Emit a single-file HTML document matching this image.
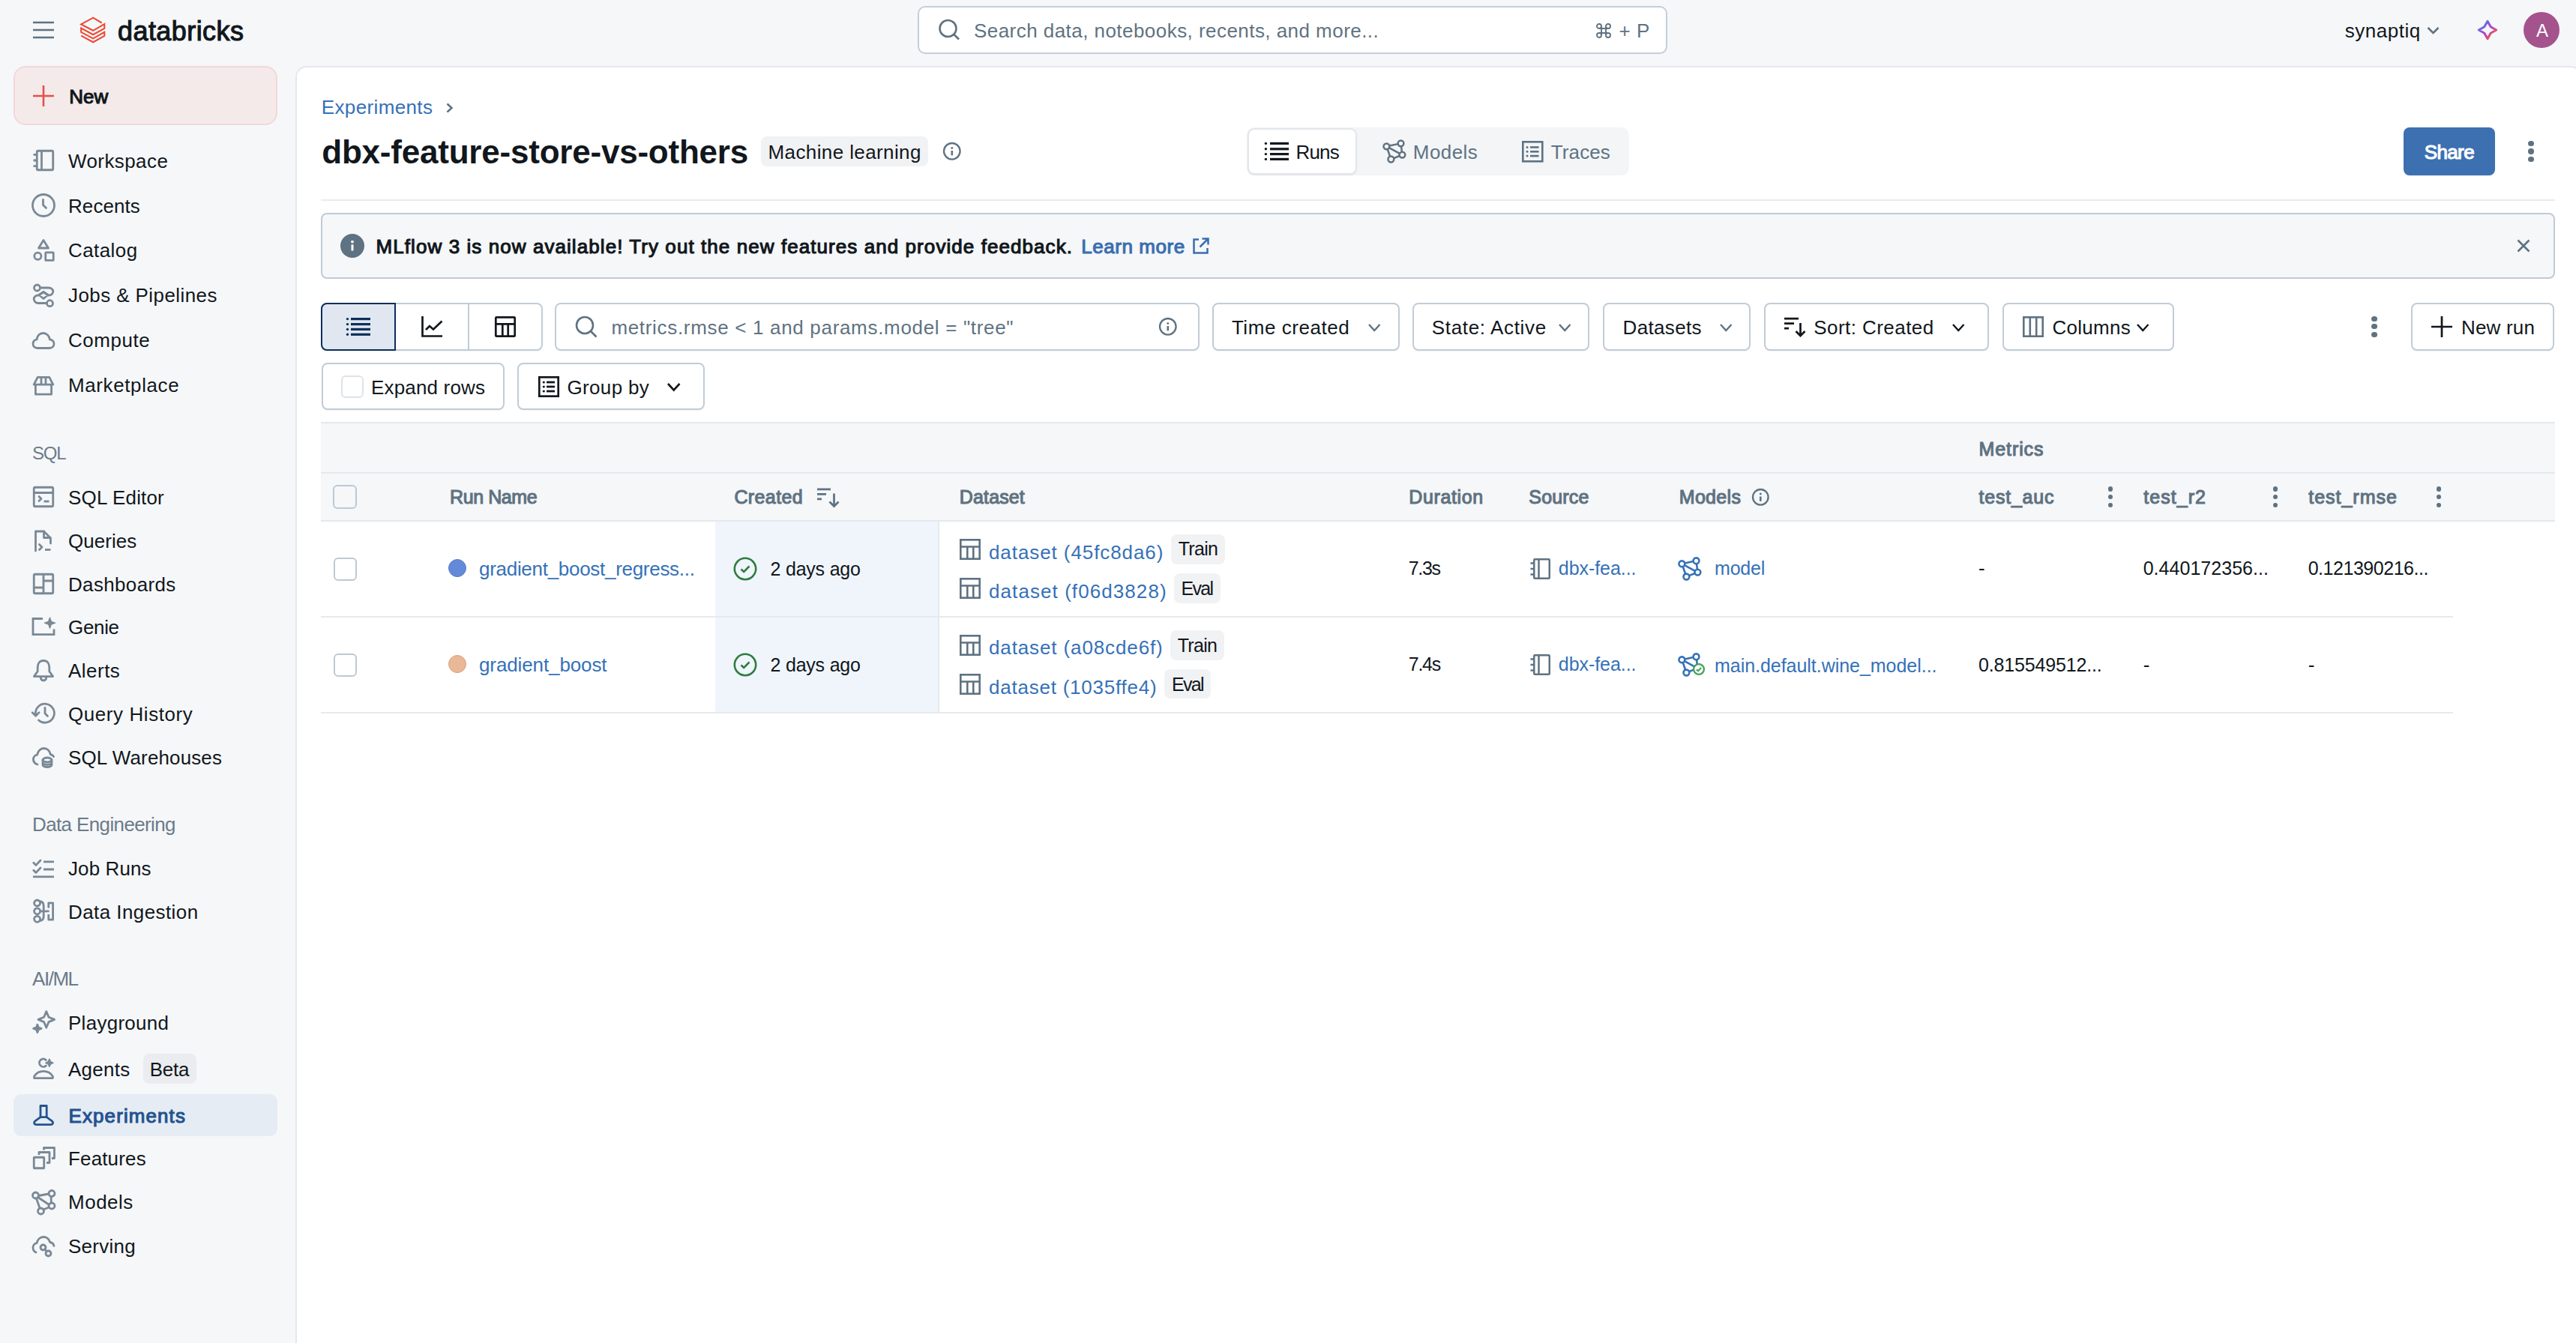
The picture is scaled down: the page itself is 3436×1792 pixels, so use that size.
<!DOCTYPE html>
<html><head><meta charset="utf-8"><title>Experiments</title>
<style>
html,body{margin:0;padding:0;width:3436px;height:1792px;overflow:hidden;background:#F6F7F9;}
body{position:relative;font-family:"Liberation Sans",sans-serif;}
.t{position:absolute;white-space:nowrap;line-height:1;}
svg{overflow:visible}
@media (max-width:1800px){html{zoom:0.5}}
</style></head><body>
<div style="position:absolute;left:1224px;top:8px;width:1000px;height:64px;box-sizing:border-box;background:#fff;border:2px solid #C2CFDB;border-radius:10px;"></div>
<svg style="position:absolute;left:1250px;top:24px;" width="34" height="34" viewBox="0 0 34 34" fill="none"><circle cx="14.5" cy="14" r="11" stroke="#5F7281" stroke-width="2.6"/><path d="M22.5 22L29 28.5" stroke="#5F7281" stroke-width="2.6"/></svg>
<div class="t" style="left:1299.00px;top:28.19px;font-size:26px;color:#5F7281;letter-spacing:0.452px;">Search data, notebooks, recents, and more...</div>
<svg style="position:absolute;left:2129px;top:31px;" width="20" height="20" viewBox="0 0 20 20" fill="none"><g stroke="#5F7281" stroke-width="1.9" fill="none"><path d="M4 7H16M4 13H16M7 4V16M13 4V16"/><circle cx="4" cy="4" r="3"/><circle cx="16" cy="4" r="3"/><circle cx="4" cy="16" r="3"/><circle cx="16" cy="16" r="3"/></g></svg>
<div class="t" style="left:2159.50px;top:27.99px;font-size:26px;color:#5F7281;">+</div>
<div class="t" style="left:2183.00px;top:27.99px;font-size:26px;color:#5F7281;">P</div>
<div class="t" style="left:3127.70px;top:27.59px;font-size:26px;color:#11171C;letter-spacing:0.536px;">synaptiq</div>
<svg style="position:absolute;left:3236px;top:34px;" width="20" height="14" viewBox="0 0 20 14" fill="none"><path d="M2.5 3L9.5 10L16.5 3" stroke="#5F7281" stroke-width="2.6"/></svg>
<svg style="position:absolute;left:3302px;top:24px;" width="32" height="32" viewBox="0 0 32 32" fill="none"><defs><linearGradient id="sg" x1="0" y1="0" x2="1" y2="1"><stop offset="0.15" stop-color="#4A7FE0"/><stop offset="0.5" stop-color="#B23FDB"/><stop offset="0.85" stop-color="#EE5548"/></linearGradient></defs><path d="M16 4.3L20.2 11.8L27.7 16L20.2 20.2L16 27.7L11.8 20.2L4.3 16L11.8 11.8Z" stroke="url(#sg)" stroke-width="3" stroke-linejoin="round"/></svg>
<div style="position:absolute;left:3366px;top:16px;width:48px;height:48px;box-sizing:border-box;background:#A4538D;border-radius:50%;"></div>
<div class="t" style="left:3383.00px;top:28.68px;font-size:24px;color:#fff;">A</div>
<svg style="position:absolute;left:44px;top:28px;" width="28" height="24" viewBox="0 0 28 24" fill="none"><path d="M0 2H28M0 12H28M0 22H28" stroke="#5F7281" stroke-width="2.4"/></svg>
<svg style="position:absolute;left:100px;top:18px;" width="50" height="44" viewBox="0 0 50 44" fill="none"><path d="M35.7 12.5L24.2 5.6L8.2 14.4L24.2 22.8L39.3 14V19.8L24.2 28.2L8.2 19.6V24.8L24.2 33.4L39.3 24.8V29.8L24.2 38.2L8.2 29.6" stroke="#EB4B36" stroke-width="2.1" stroke-linejoin="miter" fill="none"/></svg>
<div class="t" style="left:157.00px;top:23.53px;font-size:36px;color:#11171C;letter-spacing:0.427px;-webkit-text-stroke:1.1px #11171C;">databricks</div>
<div style="position:absolute;left:18px;top:88px;width:352px;height:79px;box-sizing:border-box;background:#F5EAEA;border:2px solid #F3D8D9;border-radius:16px;"></div>
<svg style="position:absolute;left:44px;top:114px;" width="28" height="28" viewBox="0 0 28 28" fill="none"><path d="M14 0V28M0 14H28" stroke="#E5504A" stroke-width="2.6"/></svg>
<div class="t" style="left:92.15px;top:115.99px;font-size:26px;color:#11171C;letter-spacing:0.085px;-webkit-text-stroke:1.1px #11171C;">New</div>
<div class="t" style="left:43.00px;top:593.28px;font-size:24px;color:#6B7B8A;letter-spacing:-1.250px;">SQL</div>
<div class="t" style="left:43.00px;top:1087.09px;font-size:26px;color:#6B7B8A;letter-spacing:-0.625px;">Data Engineering</div>
<div class="t" style="left:43.00px;top:1292.59px;font-size:26px;color:#6B7B8A;letter-spacing:-1.465px;">AI/ML</div>
<div style="position:absolute;left:18px;top:1460px;width:352px;height:56px;box-sizing:border-box;background:#E6ECF3;border-radius:10px;"></div>
<div style="position:absolute;left:191px;top:1406px;width:71px;height:40px;box-sizing:border-box;background:#EAECEF;border-radius:8px;"></div>
<div class="t" style="left:199.70px;top:1413.99px;font-size:26px;color:#11171C;letter-spacing:-0.253px;">Beta</div>
<svg style="position:absolute;left:42px;top:198.0px;" width="32" height="32" viewBox="0 0 32 32" fill="none"><g stroke="#7A8996" stroke-width="2.8" stroke-linecap="round" stroke-linejoin="round"><rect x="7.25" y="3.25" width="21.5" height="25.5" rx="1.5"/><path d="M13.5 3.5V28.5M2.5 8.4H6M2.5 16H6M2.5 23.6H6" stroke-linecap="butt"/></g></svg>
<div class="t" style="left:91.00px;top:201.69px;font-size:26px;color:#11171C;letter-spacing:0.411px;">Workspace</div>
<svg style="position:absolute;left:42px;top:258.1px;" width="32" height="32" viewBox="0 0 32 32" fill="none"><g stroke="#7A8996" stroke-width="2.8" stroke-linecap="round" stroke-linejoin="round"><circle cx="16" cy="16" r="14.5"/><path d="M15.5 8.5V15.5L19.5 19.5"/></g></svg>
<div class="t" style="left:91.00px;top:261.79px;font-size:26px;color:#11171C;letter-spacing:0.080px;">Recents</div>
<svg style="position:absolute;left:42px;top:317.8px;" width="32" height="32" viewBox="0 0 32 32" fill="none"><g stroke="#7A8996" stroke-width="2.8" stroke-linecap="round" stroke-linejoin="round"><path d="M16 2.5L22.5 13H9.5Z"/><circle cx="8.4" cy="23.7" r="4.6"/><rect x="18.75" y="18.9" width="10.5" height="10.5" rx="0.5"/></g></svg>
<div class="t" style="left:91.00px;top:321.49px;font-size:26px;color:#11171C;letter-spacing:0.422px;">Catalog</div>
<svg style="position:absolute;left:42px;top:377.8px;" width="32" height="32" viewBox="0 0 32 32" fill="none"><g stroke="#7A8996" stroke-width="2.8" stroke-linecap="round" stroke-linejoin="round"><circle cx="7.5" cy="6" r="4"/><circle cx="24.5" cy="26.7" r="4"/><path d="M11.5 6H23C26.5 6 28.8 8.5 28.8 11S26.5 16 23 16L16 11.5L9 16C5.5 16 3.2 18.5 3.2 21S5.5 26.5 9 26.5H20.5"/><path d="M16 11.5L21.5 16L16 20.5L10.5 16Z"/></g></svg>
<div class="t" style="left:91.00px;top:381.49px;font-size:26px;color:#11171C;letter-spacing:0.415px;">Jobs &amp; Pipelines</div>
<svg style="position:absolute;left:42px;top:437.8px;" width="32" height="32" viewBox="0 0 32 32" fill="none"><g stroke="#7A8996" stroke-width="2.8" stroke-linecap="round" stroke-linejoin="round"><path d="M8.5 26.5H24C27.5 26.5 30 24 30 20.8C30 17.6 27.6 15.2 24.6 15.2C23.8 10.2 20.2 6.5 15.6 6.5C11 6.5 7.6 10 7.2 14.8C4.2 15.4 2 17.8 2 20.8C2 24 4.6 26.5 8.5 26.5Z"/></g></svg>
<div class="t" style="left:91.00px;top:441.49px;font-size:26px;color:#11171C;letter-spacing:0.523px;">Compute</div>
<svg style="position:absolute;left:42px;top:497.8px;" width="32" height="32" viewBox="0 0 32 32" fill="none"><g stroke="#7A8996" stroke-width="2.8" stroke-linecap="round" stroke-linejoin="round"><path d="M3.2 15.2L8.2 5.4H23.8L28.8 15.2Z"/><path d="M13 5.6V15M19 5.6V15" stroke-linecap="butt"/><path d="M5.4 15.5V28.2H26.6V15.5"/></g></svg>
<div class="t" style="left:91.00px;top:501.49px;font-size:26px;color:#11171C;letter-spacing:0.603px;">Marketplace</div>
<svg style="position:absolute;left:42px;top:646.9px;" width="32" height="32" viewBox="0 0 32 32" fill="none"><g stroke="#7A8996" stroke-width="2.8" stroke-linecap="round" stroke-linejoin="round"><rect x="3.25" y="3.25" width="25.5" height="25.5" rx="1.5"/><path d="M3.5 10.5H28.5" /><path d="M10 15.5L13 18.5L10 21.5" /><path d="M16.5 22H23.5" stroke-linecap="butt"/></g></svg>
<div class="t" style="left:91.00px;top:650.59px;font-size:26px;color:#11171C;letter-spacing:0.174px;">SQL Editor</div>
<svg style="position:absolute;left:42px;top:705.2px;" width="32" height="32" viewBox="0 0 32 32" fill="none"><g stroke="#7A8996" stroke-width="2.8" stroke-linecap="round" stroke-linejoin="round"><path d="M5.5 30V4H16.5L25.5 13V20"/><path d="M16.5 4V12.5H25"/><path d="M10.5 21.5L14 25L10.5 28.5"/><path d="M18 28.5H25.5" stroke-linecap="butt"/></g></svg>
<div class="t" style="left:91.00px;top:708.89px;font-size:26px;color:#11171C;letter-spacing:0.050px;">Queries</div>
<svg style="position:absolute;left:42px;top:762.9px;" width="32" height="32" viewBox="0 0 32 32" fill="none"><g stroke="#7A8996" stroke-width="2.8" stroke-linecap="round" stroke-linejoin="round"><rect x="3.25" y="3.25" width="25.5" height="25.5" rx="1.5"/><path d="M16 3.5V28.5M3.5 21H16M16 12H28.5" stroke-linecap="butt"/></g></svg>
<div class="t" style="left:91.00px;top:766.59px;font-size:26px;color:#11171C;letter-spacing:0.340px;">Dashboards</div>
<svg style="position:absolute;left:42px;top:820.7px;" width="32" height="32" viewBox="0 0 32 32" fill="none"><g stroke="#7A8996" stroke-width="2.8" stroke-linecap="round" stroke-linejoin="round"><path d="M15 4.5H2V25.6H30V18.5" stroke-linecap="butt" stroke-linejoin="miter"/><path d="M24.5 3L26.4 8.3L31.7 10.2L26.4 12.1L24.5 17.4L22.6 12.1L17.3 10.2L22.6 8.3Z" fill="#7A8996" stroke-width="1.2"/></g></svg>
<div class="t" style="left:91.00px;top:824.39px;font-size:26px;color:#11171C;letter-spacing:-0.330px;">Genie</div>
<svg style="position:absolute;left:42px;top:878.5px;" width="32" height="32" viewBox="0 0 32 32" fill="none"><g stroke="#7A8996" stroke-width="2.8" stroke-linecap="round" stroke-linejoin="round"><path d="M16 2.5C10.8 2.5 8.2 6.5 8.2 11.3V16.8L3.4 23.6H28.6L23.8 16.8V11.3C23.8 6.5 21.2 2.5 16 2.5Z"/><path d="M12.2 24.6C12.2 27.3 13.8 29 16 29S19.8 27.3 19.8 24.6"/></g></svg>
<div class="t" style="left:91.00px;top:882.19px;font-size:26px;color:#11171C;letter-spacing:0.474px;">Alerts</div>
<svg style="position:absolute;left:42px;top:936.3px;" width="32" height="32" viewBox="0 0 32 32" fill="none"><g stroke="#7A8996" stroke-width="2.8" stroke-linecap="round" stroke-linejoin="round"><path d="M5.6 18A12.5 12.5 0 1 1 9.5 25"/><path d="M1.2 14.8L5.6 19.2L10 14.8"/><path d="M18 8.3V16L21.5 19.5"/></g></svg>
<div class="t" style="left:91.00px;top:939.99px;font-size:26px;color:#11171C;letter-spacing:0.570px;">Query History</div>
<svg style="position:absolute;left:42px;top:994.3px;" width="32" height="32" viewBox="0 0 32 32" fill="none"><g stroke="#7A8996" stroke-width="2.8" stroke-linecap="round" stroke-linejoin="round"><path d="M8 26C4.5 25 2.5 22.3 2.5 19.2C2.5 16 4.8 13.6 7.6 13.2C8.4 8.2 12 4.5 16.5 4.5C21 4.5 24.4 8 25.2 12.5C27 12.8 28.5 13.8 29.5 15.5"/><ellipse cx="21" cy="20" rx="6" ry="3"/><path d="M15 20V26.5C15 28.2 17.7 29.5 21 29.5S27 28.2 27 26.5V20M15 23.3C15 25 17.7 26.3 21 26.3S27 25 27 23.3"/></g></svg>
<div class="t" style="left:91.00px;top:997.99px;font-size:26px;color:#11171C;letter-spacing:0.129px;">SQL Warehouses</div>
<svg style="position:absolute;left:42px;top:1142.6px;" width="32" height="32" viewBox="0 0 32 32" fill="none"><g stroke="#7A8996" stroke-width="2.8" stroke-linecap="round" stroke-linejoin="round"><path d="M2.8 8.2L6 11.4L12 5M2.8 18.2L6 21.4L12 15" /><path d="M16 6.9H30M16 17H30M2 26.9H30" stroke-linecap="butt"/></g></svg>
<div class="t" style="left:91.00px;top:1146.29px;font-size:26px;color:#11171C;letter-spacing:0.107px;">Job Runs</div>
<svg style="position:absolute;left:42px;top:1200.3px;" width="32" height="32" viewBox="0 0 32 32" fill="none"><g stroke="#7A8996" stroke-width="2.8" stroke-linecap="round" stroke-linejoin="round"><circle cx="7.6" cy="5" r="4"/><circle cx="7.6" cy="15.8" r="4"/><circle cx="7.6" cy="26.3" r="4"/><path d="M10.5 2.5C14.5 2.8 16.2 5 16.2 8.5V23C16.2 26.5 14.5 28.5 10.5 28.8M11.6 15.8H23.6" stroke-linecap="butt"/><path d="M22.8 11.5V4.8H28.6V27.2H22.8V20" stroke-linecap="butt" stroke-linejoin="round"/></g></svg>
<div class="t" style="left:91.00px;top:1203.99px;font-size:26px;color:#11171C;letter-spacing:0.423px;">Data Ingestion</div>
<svg style="position:absolute;left:42px;top:1348.6px;" width="32" height="32" viewBox="0 0 32 32" fill="none"><g stroke="#7A8996" stroke-width="2.8" stroke-linecap="round" stroke-linejoin="round"><path d="M19.8 0.6L23.0 8.2L30.6 11.4L23.0 14.6L19.8 22.2L16.6 14.6L9.0 11.4L16.6 8.2Z"/><path d="M7.9 18.2L9.3 22.0L13.1 23.4L9.3 24.8L7.9 28.6L6.5 24.8L2.7 23.4L6.5 22.0Z" fill="#7A8996"/></g></svg>
<div class="t" style="left:91.00px;top:1352.29px;font-size:26px;color:#11171C;letter-spacing:0.271px;">Playground</div>
<svg style="position:absolute;left:42px;top:1410.3px;" width="32" height="32" viewBox="0 0 32 32" fill="none"><g stroke="#7A8996" stroke-width="2.8" stroke-linecap="round" stroke-linejoin="round"><path d="M19.4 4.5A5.2 5.2 0 1 0 19.4 11.9"/><path d="M23.9 3.2L25.5 6.6L28.9 8.2L25.5 9.8L23.9 13.2L22.3 9.8L18.9 8.2L22.3 6.6Z" fill="#7A8996" stroke-width="1.6"/><path d="M3.6 28.6V26.2C6.2 22 10.6 19.4 16 19.4S25.8 22 28.4 26.2V28.6Z"/></g></svg>
<div class="t" style="left:91.00px;top:1413.99px;font-size:26px;color:#11171C;letter-spacing:0.282px;">Agents</div>
<svg style="position:absolute;left:42px;top:1471.9px;" width="32" height="32" viewBox="0 0 32 32" fill="none"><g stroke="#24538F" stroke-width="2.8" stroke-linecap="round" stroke-linejoin="round"><path d="M12 18.6V3.5H20.2V18.6Z"/><path d="M12 18.6L4.8 23.8C2.6 25.6 3.6 28.6 6.4 28.6H25.8C28.6 28.6 29.6 25.6 27.4 23.8L20.2 18.6"/></g></svg>
<div class="t" style="left:91.55px;top:1475.59px;font-size:26px;color:#24538F;letter-spacing:1.084px;-webkit-text-stroke:1.1px #24538F;">Experiments</div>
<svg style="position:absolute;left:42px;top:1529.8px;" width="32" height="32" viewBox="0 0 32 32" fill="none"><g stroke="#7A8996" stroke-width="2.8" stroke-linecap="round" stroke-linejoin="round"><rect x="3.25" y="14.25" width="13.5" height="14.5" rx="0.5"/><path d="M10 11V7.5H24V21.5H20M16.5 4.5V1.5H30.5V15.5H27" stroke-linecap="butt"/></g></svg>
<div class="t" style="left:91.00px;top:1533.49px;font-size:26px;color:#11171C;letter-spacing:0.147px;">Features</div>
<svg style="position:absolute;left:42px;top:1587.7px;" width="32" height="32" viewBox="0 0 32 32" fill="none"><g stroke="#7A8996" stroke-width="2.8" stroke-linecap="round" stroke-linejoin="round"><circle cx="5.5" cy="7" r="4"/><circle cx="27" cy="4.5" r="4"/><circle cx="27" cy="21" r="4"/><circle cx="12.5" cy="28" r="4"/><path d="M9.5 7.5L23 5M8.5 9.5L23.5 19.5M26 8.5L26.5 17M23.2 23L15.8 26M6.5 11L11 24"/></g></svg>
<div class="t" style="left:91.00px;top:1591.39px;font-size:26px;color:#11171C;letter-spacing:0.510px;">Models</div>
<svg style="position:absolute;left:42px;top:1645.9px;" width="32" height="32" viewBox="0 0 32 32" fill="none"><g stroke="#7A8996" stroke-width="2.8" stroke-linecap="round" stroke-linejoin="round"><path d="M6 25C3.5 24 2 21.5 2 18.7C2 15.5 4.3 13 7.2 12.6C8 7.8 11.6 4.5 16 4.5C20 4.5 23.5 7.3 24.6 11.5C27.6 12 29.5 14 30 16.5"/><circle cx="15.5" cy="18.5" r="3.5"/><circle cx="22.5" cy="26.5" r="3.5"/><path d="M17.8 21L20.2 24"/></g></svg>
<div class="t" style="left:91.00px;top:1649.59px;font-size:26px;color:#11171C;letter-spacing:0.277px;">Serving</div>
<div style="position:absolute;left:394px;top:88px;width:3050px;height:1742px;box-sizing:border-box;background:#fff;border:2px solid #E4E8EC;border-radius:15px;"></div>
<div class="t" style="left:428.80px;top:129.99px;font-size:26px;color:#3571B8;letter-spacing:0.364px;">Experiments</div>
<svg style="position:absolute;left:594px;top:136px;" width="12" height="16" viewBox="0 0 12 16" fill="none"><path d="M2.5 2.5L8.5 8L2.5 13.5" stroke="#5F7281" stroke-width="2.5" fill="none"/></svg>
<div class="t" style="left:429.30px;top:181.35px;font-size:44px;color:#11171C;font-weight:700;letter-spacing:-0.217px;">dbx-feature-store-vs-others</div>
<div style="position:absolute;left:1015px;top:182px;width:223px;height:40px;box-sizing:border-box;background:#F1F2F4;border-radius:8px;"></div>
<div class="t" style="left:1024.50px;top:189.89px;font-size:26px;color:#11171C;letter-spacing:0.394px;">Machine learning</div>
<svg style="position:absolute;left:1257.0px;top:189.2px;" width="25.6" height="25.6" viewBox="0 0 25.6 25.6" fill="none"><circle cx="12.8" cy="12.8" r="10.8" stroke="#5F7281" stroke-width="2.3"/><circle cx="12.8" cy="8.600000000000001" r="1.5" fill="#5F7281"/><path d="M12.8 12.0V18.3" stroke="#5F7281" stroke-width="2.6"/></svg>
<div style="position:absolute;left:1663px;top:170px;width:510px;height:64px;box-sizing:border-box;background:#F3F5F7;border-radius:10px;"></div>
<div style="position:absolute;left:1664px;top:171px;width:146px;height:62px;box-sizing:border-box;background:#fff;border:2px solid #E3E7EB;border-radius:9px;box-shadow:0 1px 2px rgba(0,0,0,0.08);"></div>
<svg style="position:absolute;left:1686px;top:188px;" width="34" height="28" viewBox="0 0 34 28" fill="none"><g fill="#11171C"><circle cx="2.400000000000091" cy="3.4000000000000057" r="1.7"/><rect x="8" y="1.8000000000000056" width="25" height="3.2"/><circle cx="2.400000000000091" cy="10.800000000000011" r="1.7"/><rect x="8" y="9.200000000000012" width="25" height="3.2"/><circle cx="2.400000000000091" cy="17.599999999999994" r="1.7"/><rect x="8" y="15.999999999999995" width="25" height="3.2"/><circle cx="2.400000000000091" cy="24.400000000000006" r="1.7"/><rect x="8" y="22.800000000000004" width="25" height="3.2"/></g></svg>
<div class="t" style="left:1728.60px;top:189.79px;font-size:26px;color:#11171C;letter-spacing:-0.870px;">Runs</div>
<svg style="position:absolute;left:1844px;top:186px;" width="32" height="32" viewBox="0 0 32 32" fill="none"><g stroke="#5F7281" stroke-width="2.5" fill="none"><circle cx="5.4" cy="9.3" r="3.9"/><circle cx="24.5" cy="5.3" r="3.9"/><circle cx="26.4" cy="20.6" r="3.9"/><circle cx="11.4" cy="26.5" r="3.9"/><path d="M9.2 8.5L20.7 6.1M8.8 11.1L23.0 18.8M25.0 9.2L25.9 16.7M22.8 22.0L15.0 25.1M6.7 13.0L10.1 22.8"/></g></svg>
<div class="t" style="left:1884.80px;top:189.79px;font-size:26px;color:#5F7281;letter-spacing:0.430px;">Models</div>
<svg style="position:absolute;left:2030px;top:188px;" width="29" height="29" viewBox="0 0 29 29" fill="none"><g stroke="#5F7281" stroke-width="2.6"><rect x="1.3" y="1.3" width="26" height="26"/></g><g fill="#5F7281"><circle cx="7" cy="8.5" r="1.5"/><circle cx="7" cy="14.3" r="1.5"/><circle cx="7" cy="20.1" r="1.5"/><rect x="11" y="7.2" width="11.5" height="2.6"/><rect x="11" y="13" width="11.5" height="2.6"/><rect x="11" y="18.8" width="11.5" height="2.6"/></g></svg>
<div class="t" style="left:2068.70px;top:189.79px;font-size:26px;color:#5F7281;letter-spacing:0.136px;">Traces</div>
<div style="position:absolute;left:3206px;top:170px;width:122px;height:64px;box-sizing:border-box;background:#3C70B1;border-radius:8px;box-shadow:0 1px 1px rgba(0,0,0,0.08);"></div>
<div class="t" style="left:3233.75px;top:190.39px;font-size:26px;color:#fff;letter-spacing:-0.630px;-webkit-text-stroke:1.1px #fff;">Share</div>
<div style="position:absolute;left:3372.3px;top:187.5px;width:7.399999999999636px;height:7.399999999999977px;box-sizing:border-box;background:#5F7281;border-radius:50%;"></div>
<div style="position:absolute;left:3372.3px;top:198.3px;width:7.399999999999636px;height:7.399999999999977px;box-sizing:border-box;background:#5F7281;border-radius:50%;"></div>
<div style="position:absolute;left:3372.3px;top:208.9px;width:7.399999999999636px;height:7.399999999999977px;box-sizing:border-box;background:#5F7281;border-radius:50%;"></div>
<div style="position:absolute;left:428px;top:266px;width:2980px;height:2px;box-sizing:border-box;background:#E8EBEF;"></div>
<div style="position:absolute;left:428px;top:284px;width:2980px;height:88px;box-sizing:border-box;background:#F5F7F9;border:2px solid #BFCBD7;border-radius:8px;"></div>
<svg style="position:absolute;left:453.8px;top:312px;" width="32" height="32" viewBox="0 0 32 32" fill="none"><circle cx="16" cy="16" r="16" fill="#5F7281"/><circle cx="16" cy="10.6" r="1.9" fill="#fff"/><path d="M16 14.3V22.5" stroke="#fff" stroke-width="3"/></svg>
<div class="t" style="left:501.55px;top:315.59px;font-size:26px;color:#11171C;letter-spacing:1.072px;-webkit-text-stroke:1.1px #11171C;">MLflow 3 is now available! Try out the new features and provide feedback.</div>
<div class="t" style="left:1442.15px;top:315.79px;font-size:26px;color:#3A6EB0;letter-spacing:0.568px;-webkit-text-stroke:1.1px #3A6EB0;">Learn more</div>
<svg style="position:absolute;left:1590px;top:316px;" width="24" height="24" viewBox="0 0 24 24" fill="none"><g stroke="#3A6EB0" stroke-width="2.5" fill="none"><path d="M9 3.5H2.5V21.5H20.5V15"/><path d="M13.5 2.5H21.5V10.5M21 3L10.5 13.5"/></g></svg>
<svg style="position:absolute;left:3356px;top:318px;" width="20" height="20" viewBox="0 0 20 20" fill="none"><path d="M2.5 2.5L17.5 17.5M17.5 2.5L2.5 17.5" stroke="#5F7281" stroke-width="2.6"/></svg>
<div style="position:absolute;left:428px;top:404px;width:296px;height:64px;box-sizing:border-box;background:#fff;border:2px solid #C0CCD8;border-radius:8px;box-shadow:0 2px 1px -1px rgba(0,0,0,0.05);"></div>
<div style="position:absolute;left:428px;top:404px;width:100px;height:64px;box-sizing:border-box;background:#E0E7F0;border:2px solid #0E2E5A;border-radius:8px 0 0 8px;"></div>
<div style="position:absolute;left:624px;top:406px;width:2px;height:60px;box-sizing:border-box;background:#C0CCD8;"></div>
<svg style="position:absolute;left:460px;top:420px;" width="36" height="32" viewBox="0 0 36 32" fill="none"><g fill="#0E2E5A"><circle cx="3.5" cy="5.600000000000023" r="1.7"/><rect x="8" y="4.000000000000023" width="26" height="3.2"/><circle cx="3.5" cy="12.600000000000023" r="1.7"/><rect x="8" y="11.000000000000023" width="26" height="3.2"/><circle cx="3.5" cy="19.399999999999977" r="1.7"/><rect x="8" y="17.799999999999976" width="26" height="3.2"/><circle cx="3.5" cy="26.30000000000001" r="1.7"/><rect x="8" y="24.70000000000001" width="26" height="3.2"/></g></svg>
<svg style="position:absolute;left:560px;top:420px;" width="32" height="32" viewBox="0 0 32 32" fill="none"><g stroke="#11171C" stroke-width="2.7" fill="none"><path d="M3.5 2V28.5H30"/><path d="M8 20L13 15L18 19.5L29.5 8.5"/></g></svg>
<svg style="position:absolute;left:659px;top:421px;" width="30" height="30" viewBox="0 0 30 30" fill="none"><g stroke="#11171C" stroke-width="2.7" fill="none"><rect x="2.3" y="2.3" width="25.4" height="25.4" rx="1"/><path d="M2.5 11.3H27.5M11.3 11.3V27.5M18.7 11.3V27.5"/></g></svg>
<div style="position:absolute;left:740px;top:404px;width:860px;height:64px;box-sizing:border-box;background:#fff;border:2px solid #C0CCD8;border-radius:8px;box-shadow:0 2px 1px -1px rgba(0,0,0,0.05);"></div>
<svg style="position:absolute;left:766px;top:420px;" width="34" height="34" viewBox="0 0 34 34" fill="none"><circle cx="14" cy="14" r="11" stroke="#5F7281" stroke-width="2.6"/><path d="M22 22L29.5 29.5" stroke="#5F7281" stroke-width="2.6"/></svg>
<div class="t" style="left:815.40px;top:423.99px;font-size:26px;color:#5F7281;letter-spacing:0.680px;">metrics.rmse &lt; 1 and params.model = "tree"</div>
<svg style="position:absolute;left:1545.2px;top:423.2px;" width="25.6" height="25.6" viewBox="0 0 25.6 25.6" fill="none"><circle cx="12.8" cy="12.8" r="10.8" stroke="#5F7281" stroke-width="2.3"/><circle cx="12.8" cy="8.600000000000001" r="1.5" fill="#5F7281"/><path d="M12.8 12.0V18.3" stroke="#5F7281" stroke-width="2.6"/></svg>
<div style="position:absolute;left:1616.5px;top:404px;width:250.0px;height:64px;box-sizing:border-box;background:#fff;border:2px solid #C0CCD8;border-radius:8px;box-shadow:0 2px 1px -1px rgba(0,0,0,0.05);"></div>
<div class="t" style="left:1642.90px;top:423.79px;font-size:26px;color:#11171C;letter-spacing:0.545px;">Time created</div>
<svg style="position:absolute;left:1823.8px;top:430.8px;" width="18.5" height="12" viewBox="0 0 18.5 12" fill="none"><path d="M2 2L9.25 10L16.5 2" stroke="#5F7281" stroke-width="2.4" fill="none"/></svg>
<div style="position:absolute;left:1883.6px;top:404px;width:236.80000000000018px;height:64px;box-sizing:border-box;background:#fff;border:2px solid #C0CCD8;border-radius:8px;box-shadow:0 2px 1px -1px rgba(0,0,0,0.05);"></div>
<div class="t" style="left:1909.80px;top:423.79px;font-size:26px;color:#11171C;letter-spacing:0.653px;">State: Active</div>
<svg style="position:absolute;left:2077.7px;top:430.8px;" width="18.5" height="12" viewBox="0 0 18.5 12" fill="none"><path d="M2 2L9.25 10L16.5 2" stroke="#5F7281" stroke-width="2.4" fill="none"/></svg>
<div style="position:absolute;left:2137.5px;top:404px;width:197.9000000000001px;height:64px;box-sizing:border-box;background:#fff;border:2px solid #C0CCD8;border-radius:8px;box-shadow:0 2px 1px -1px rgba(0,0,0,0.05);"></div>
<div class="t" style="left:2164.60px;top:423.79px;font-size:26px;color:#11171C;letter-spacing:0.333px;">Datasets</div>
<svg style="position:absolute;left:2292.5px;top:430.8px;" width="18.5" height="12" viewBox="0 0 18.5 12" fill="none"><path d="M2 2L9.25 10L16.5 2" stroke="#5F7281" stroke-width="2.4" fill="none"/></svg>
<div style="position:absolute;left:2352.8px;top:404px;width:300.1999999999998px;height:64px;box-sizing:border-box;background:#fff;border:2px solid #C0CCD8;border-radius:8px;box-shadow:0 2px 1px -1px rgba(0,0,0,0.05);"></div>
<div class="t" style="left:2419.30px;top:423.79px;font-size:26px;color:#11171C;letter-spacing:0.436px;">Sort: Created</div>
<svg style="position:absolute;left:2603.1px;top:430.8px;" width="18.5" height="12" viewBox="0 0 18.5 12" fill="none"><path d="M2 2L9.25 10L16.5 2" stroke="#11171C" stroke-width="2.4" fill="none"/></svg>
<div style="position:absolute;left:2670.6px;top:404px;width:229.0px;height:64px;box-sizing:border-box;background:#fff;border:2px solid #C0CCD8;border-radius:8px;box-shadow:0 2px 1px -1px rgba(0,0,0,0.05);"></div>
<div class="t" style="left:2737.40px;top:423.79px;font-size:26px;color:#11171C;letter-spacing:0.288px;">Columns</div>
<svg style="position:absolute;left:2849.2px;top:430.8px;" width="18.5" height="12" viewBox="0 0 18.5 12" fill="none"><path d="M2 2L9.25 10L16.5 2" stroke="#11171C" stroke-width="2.4" fill="none"/></svg>
<svg style="position:absolute;left:2378px;top:421px;" width="32" height="30" viewBox="0 0 32 30" fill="none"><g stroke="#11171C" stroke-width="2.7" fill="none"><path d="M2 4.2H21M2 10.7H15M2 17.2H8M23.5 10V27M17.5 21L23.5 27L29.5 21"/></g></svg>
<svg style="position:absolute;left:2696px;top:420px;" width="32" height="32" viewBox="0 0 32 32" fill="none"><g stroke="#5F7281" stroke-width="2.6" fill="none"><rect x="3.3" y="3.3" width="25.4" height="25.4"/><path d="M11.8 3.5V28.5M20.2 3.5V28.5"/></g></svg>
<div style="position:absolute;left:3163.4px;top:421.9px;width:7.199999999999818px;height:7.2000000000000455px;box-sizing:border-box;background:#5F7281;border-radius:50%;"></div>
<div style="position:absolute;left:3163.4px;top:432.2px;width:7.199999999999818px;height:7.2000000000000455px;box-sizing:border-box;background:#5F7281;border-radius:50%;"></div>
<div style="position:absolute;left:3163.4px;top:442.59999999999997px;width:7.199999999999818px;height:7.2000000000000455px;box-sizing:border-box;background:#5F7281;border-radius:50%;"></div>
<div style="position:absolute;left:3215.5px;top:404px;width:191.80000000000018px;height:64px;box-sizing:border-box;background:#fff;border:2px solid #C0CCD8;border-radius:8px;box-shadow:0 2px 1px -1px rgba(0,0,0,0.05);"></div>
<svg style="position:absolute;left:3242px;top:421px;" width="30" height="30" viewBox="0 0 30 30" fill="none"><path d="M15 1V29M1 15H29" stroke="#11171C" stroke-width="2.7"/></svg>
<div class="t" style="left:3283.00px;top:423.89px;font-size:26px;color:#11171C;letter-spacing:0.175px;">New run</div>
<div style="position:absolute;left:428.8px;top:484px;width:244.40000000000003px;height:63px;box-sizing:border-box;background:#fff;border:2px solid #C0CCD8;border-radius:8px;box-shadow:0 2px 1px -1px rgba(0,0,0,0.05);"></div>
<div style="position:absolute;left:454.6px;top:500.6px;width:30.799999999999955px;height:30.600000000000023px;box-sizing:border-box;background:#fff;border:2px solid #DDE3E8;border-radius:6px;"></div>
<div class="t" style="left:495.00px;top:503.99px;font-size:26px;color:#11171C;letter-spacing:0.172px;">Expand rows</div>
<div style="position:absolute;left:690.4px;top:484px;width:250.10000000000002px;height:63px;box-sizing:border-box;background:#fff;border:2px solid #C0CCD8;border-radius:8px;box-shadow:0 2px 1px -1px rgba(0,0,0,0.05);"></div>
<svg style="position:absolute;left:717px;top:501px;" width="30" height="30" viewBox="0 0 30 30" fill="none"><g stroke="#11171C" stroke-width="2.7" fill="none"><rect x="2.3" y="2.3" width="25.4" height="25.4"/></g><g fill="#11171C"><circle cx="8.3" cy="9" r="1.6"/><circle cx="8.3" cy="15" r="1.6"/><circle cx="8.3" cy="21" r="1.6"/><rect x="12" y="7.6" width="11" height="2.8"/><rect x="12" y="13.6" width="11" height="2.8"/><rect x="12" y="19.6" width="11" height="2.8"/></g></svg>
<div class="t" style="left:756.50px;top:503.99px;font-size:26px;color:#11171C;letter-spacing:0.344px;">Group by</div>
<svg style="position:absolute;left:889.3px;top:509.5px;" width="19.5" height="12.5" viewBox="0 0 19.5 12.5" fill="none"><path d="M2 2L9.75 10.5L17.5 2" stroke="#11171C" stroke-width="2.6" fill="none"/></svg>
<div style="position:absolute;left:428px;top:564px;width:2980px;height:131px;box-sizing:border-box;background:#F5F7F9;"></div>
<div style="position:absolute;left:428px;top:563px;width:2980px;height:2px;box-sizing:border-box;background:#E4E9ED;"></div>
<div style="position:absolute;left:428px;top:630px;width:2980px;height:2px;box-sizing:border-box;background:#E4E9ED;"></div>
<div style="position:absolute;left:428px;top:694px;width:2980px;height:2px;box-sizing:border-box;background:#E4E9ED;"></div>
<div class="t" style="left:2639.55px;top:586.54px;font-size:25px;color:#5F7281;letter-spacing:0.900px;-webkit-text-stroke:1.1px #5F7281;">Metrics</div>
<div style="position:absolute;left:444px;top:647px;width:32px;height:32px;box-sizing:border-box;border:2px solid #BCC9D5;border-radius:6px;"></div>
<div class="t" style="left:600.05px;top:650.94px;font-size:25px;color:#5F7281;letter-spacing:-0.414px;-webkit-text-stroke:1.1px #5F7281;">Run Name</div>
<div class="t" style="left:979.45px;top:650.94px;font-size:25px;color:#5F7281;letter-spacing:0.383px;-webkit-text-stroke:1.1px #5F7281;">Created</div>
<div class="t" style="left:1279.85px;top:650.94px;font-size:25px;color:#5F7281;letter-spacing:0.129px;-webkit-text-stroke:1.1px #5F7281;">Dataset</div>
<div class="t" style="left:1879.35px;top:650.94px;font-size:25px;color:#5F7281;letter-spacing:0.629px;-webkit-text-stroke:1.1px #5F7281;">Duration</div>
<div class="t" style="left:2039.35px;top:650.94px;font-size:25px;color:#5F7281;letter-spacing:0.170px;-webkit-text-stroke:1.1px #5F7281;">Source</div>
<div class="t" style="left:2239.75px;top:650.94px;font-size:25px;color:#5F7281;letter-spacing:0.315px;-webkit-text-stroke:1.1px #5F7281;">Models</div>
<div class="t" style="left:2639.55px;top:650.94px;font-size:25px;color:#5F7281;letter-spacing:0.771px;-webkit-text-stroke:1.1px #5F7281;">test_auc</div>
<div class="t" style="left:2859.25px;top:650.94px;font-size:25px;color:#5F7281;letter-spacing:1.054px;-webkit-text-stroke:1.1px #5F7281;">test_r2</div>
<div class="t" style="left:3079.25px;top:650.94px;font-size:25px;color:#5F7281;letter-spacing:0.981px;-webkit-text-stroke:1.1px #5F7281;">test_rmse</div>
<svg style="position:absolute;left:1088px;top:649px;" width="32" height="30" viewBox="0 0 32 30" fill="none"><g stroke="#5F7281" stroke-width="2.7" fill="none"><path d="M2 3.8H20M2 10.3H14M2 16.8H8M24.5 9.5V26.5M18.5 20.5L24.5 26.5L30.5 20.5"/></g></svg>
<svg style="position:absolute;left:2335.7px;top:650.7px;" width="24.6" height="24.6" viewBox="0 0 24.6 24.6" fill="none"><circle cx="12.3" cy="12.3" r="10.3" stroke="#5F7281" stroke-width="2.3"/><circle cx="12.3" cy="8.100000000000001" r="1.5" fill="#5F7281"/><path d="M12.3 11.5V17.8" stroke="#5F7281" stroke-width="2.6"/></svg>
<div style="position:absolute;left:2811.5px;top:649.2px;width:6.600000000000364px;height:6.599999999999909px;box-sizing:border-box;background:#5F7281;border-radius:50%;"></div>
<div style="position:absolute;left:2811.5px;top:659.9000000000001px;width:6.600000000000364px;height:6.599999999999909px;box-sizing:border-box;background:#5F7281;border-radius:50%;"></div>
<div style="position:absolute;left:2811.5px;top:670.5px;width:6.600000000000364px;height:6.599999999999909px;box-sizing:border-box;background:#5F7281;border-radius:50%;"></div>
<div style="position:absolute;left:3031.7px;top:649.2px;width:6.600000000000364px;height:6.599999999999909px;box-sizing:border-box;background:#5F7281;border-radius:50%;"></div>
<div style="position:absolute;left:3031.7px;top:659.9000000000001px;width:6.600000000000364px;height:6.599999999999909px;box-sizing:border-box;background:#5F7281;border-radius:50%;"></div>
<div style="position:absolute;left:3031.7px;top:670.5px;width:6.600000000000364px;height:6.599999999999909px;box-sizing:border-box;background:#5F7281;border-radius:50%;"></div>
<div style="position:absolute;left:3249.7px;top:649.2px;width:6.600000000000364px;height:6.599999999999909px;box-sizing:border-box;background:#5F7281;border-radius:50%;"></div>
<div style="position:absolute;left:3249.7px;top:659.9000000000001px;width:6.600000000000364px;height:6.599999999999909px;box-sizing:border-box;background:#5F7281;border-radius:50%;"></div>
<div style="position:absolute;left:3249.7px;top:670.5px;width:6.600000000000364px;height:6.599999999999909px;box-sizing:border-box;background:#5F7281;border-radius:50%;"></div>
<div style="position:absolute;left:954px;top:696px;width:298px;height:255px;box-sizing:border-box;background:#F0F5FC;"></div>
<div style="position:absolute;left:1251px;top:696px;width:2px;height:255px;box-sizing:border-box;background:#E4E9ED;"></div>
<div style="position:absolute;left:428px;top:822px;width:2844px;height:2px;box-sizing:border-box;background:#E6EAEE;"></div>
<div style="position:absolute;left:428px;top:950px;width:2844px;height:2px;box-sizing:border-box;background:#E6EAEE;"></div>
<div style="position:absolute;left:444.5px;top:743.5px;width:31.0px;height:31.0px;box-sizing:border-box;background:#fff;border:2px solid #BCC9D5;border-radius:6px;"></div>
<div style="position:absolute;left:598px;top:746px;width:24px;height:24px;box-sizing:border-box;background:#6589D9;border:1.5px solid #5A7CCB;border-radius:50%;"></div>
<div class="t" style="left:639.00px;top:746.19px;font-size:26px;color:#3571B8;letter-spacing:-0.289px;">gradient_boost_regress...</div>
<svg style="position:absolute;left:978px;top:743px;" width="32" height="32" viewBox="0 0 32 32" fill="none"><g stroke="#2F7D3E" stroke-width="2.6" fill="none"><circle cx="16" cy="16" r="14.2"/><path d="M10.5 16.5L14.2 20L21.5 12.5"/></g></svg>
<div class="t" style="left:1027.50px;top:746.74px;font-size:25px;color:#11171C;letter-spacing:-0.208px;">2 days ago</div>
<svg style="position:absolute;left:2040px;top:745px;" width="28" height="28" viewBox="0 0 28 28" fill="none"><g stroke="#5F7281" stroke-width="2.5"><rect x="6.25" y="1.25" width="20.5" height="25.5" rx="1"/><path d="M12.5 1.5V26.5M1.5 6.5H6M1.5 14H6M1.5 21.5H6"/></g></svg>
<div class="t" style="left:2078.80px;top:746.34px;font-size:25px;color:#3571B8;letter-spacing:-0.061px;">dbx-fea...</div>
<div style="position:absolute;left:444.5px;top:871.5px;width:31.0px;height:31.0px;box-sizing:border-box;background:#fff;border:2px solid #BCC9D5;border-radius:6px;"></div>
<div style="position:absolute;left:598px;top:874px;width:24px;height:24px;box-sizing:border-box;background:#E9B897;border:1.5px solid #D9A27F;border-radius:50%;"></div>
<div class="t" style="left:639.00px;top:874.19px;font-size:26px;color:#3571B8;letter-spacing:-0.115px;">gradient_boost</div>
<svg style="position:absolute;left:978px;top:871px;" width="32" height="32" viewBox="0 0 32 32" fill="none"><g stroke="#2F7D3E" stroke-width="2.6" fill="none"><circle cx="16" cy="16" r="14.2"/><path d="M10.5 16.5L14.2 20L21.5 12.5"/></g></svg>
<div class="t" style="left:1027.50px;top:874.74px;font-size:25px;color:#11171C;letter-spacing:-0.208px;">2 days ago</div>
<svg style="position:absolute;left:2040px;top:873px;" width="28" height="28" viewBox="0 0 28 28" fill="none"><g stroke="#5F7281" stroke-width="2.5"><rect x="6.25" y="1.25" width="20.5" height="25.5" rx="1"/><path d="M12.5 1.5V26.5M1.5 6.5H6M1.5 14H6M1.5 21.5H6"/></g></svg>
<div class="t" style="left:2078.80px;top:874.34px;font-size:25px;color:#3571B8;letter-spacing:-0.061px;">dbx-fea...</div>
<svg style="position:absolute;left:1280px;top:719px;" width="28" height="28" viewBox="0 0 28 28" fill="none"><g stroke="#5F7281" stroke-width="2.6"><rect x="1.3" y="1.3" width="25.4" height="25.4"/><path d="M1.3 10.5H26.7M10.3 10.5V26.7M18.3 10.5V26.7"/></g></svg>
<svg style="position:absolute;left:1280px;top:771px;" width="28" height="28" viewBox="0 0 28 28" fill="none"><g stroke="#5F7281" stroke-width="2.6"><rect x="1.3" y="1.3" width="25.4" height="25.4"/><path d="M1.3 10.5H26.7M10.3 10.5V26.7M18.3 10.5V26.7"/></g></svg>
<svg style="position:absolute;left:1280px;top:847px;" width="28" height="28" viewBox="0 0 28 28" fill="none"><g stroke="#5F7281" stroke-width="2.6"><rect x="1.3" y="1.3" width="25.4" height="25.4"/><path d="M1.3 10.5H26.7M10.3 10.5V26.7M18.3 10.5V26.7"/></g></svg>
<svg style="position:absolute;left:1280px;top:899px;" width="28" height="28" viewBox="0 0 28 28" fill="none"><g stroke="#5F7281" stroke-width="2.6"><rect x="1.3" y="1.3" width="25.4" height="25.4"/><path d="M1.3 10.5H26.7M10.3 10.5V26.7M18.3 10.5V26.7"/></g></svg>
<div class="t" style="left:1319.00px;top:724.09px;font-size:26px;color:#3571B8;letter-spacing:0.915px;">dataset (45fc8da6)</div>
<div style="position:absolute;left:1562px;top:713px;width:72px;height:40px;box-sizing:border-box;background:#F1F2F4;border-radius:8px;"></div>
<div class="t" style="left:1571.70px;top:720.44px;font-size:25px;color:#11171C;letter-spacing:-0.675px;">Train</div>
<div class="t" style="left:1319.00px;top:775.79px;font-size:26px;color:#3571B8;letter-spacing:1.078px;">dataset (f06d3828)</div>
<div style="position:absolute;left:1566px;top:765px;width:62px;height:40px;box-sizing:border-box;background:#F1F2F4;border-radius:8px;"></div>
<div class="t" style="left:1575.60px;top:772.74px;font-size:25px;color:#11171C;letter-spacing:-1.708px;">Eval</div>
<div class="t" style="left:1319.00px;top:851.29px;font-size:26px;color:#3571B8;letter-spacing:0.880px;">dataset (a08cde6f)</div>
<div style="position:absolute;left:1561px;top:841px;width:72px;height:40px;box-sizing:border-box;background:#F1F2F4;border-radius:8px;"></div>
<div class="t" style="left:1570.70px;top:849.24px;font-size:25px;color:#11171C;letter-spacing:-0.675px;">Train</div>
<div class="t" style="left:1319.00px;top:903.59px;font-size:26px;color:#3571B8;letter-spacing:0.771px;">dataset (1035ffe4)</div>
<div style="position:absolute;left:1553px;top:893px;width:62px;height:39px;box-sizing:border-box;background:#F1F2F4;border-radius:8px;"></div>
<div class="t" style="left:1563.00px;top:900.54px;font-size:25px;color:#11171C;letter-spacing:-1.708px;">Eval</div>
<div class="t" style="left:1878.80px;top:746.34px;font-size:25px;color:#11171C;letter-spacing:-1.350px;">7.3s</div>
<div class="t" style="left:1878.80px;top:874.44px;font-size:25px;color:#11171C;letter-spacing:-1.283px;">7.4s</div>
<svg style="position:absolute;left:2238px;top:743px;" width="32" height="32" viewBox="0 0 32 32" fill="none"><g stroke="#3571B8" stroke-width="2.6" fill="none"><circle cx="5.4" cy="9.3" r="3.9"/><circle cx="24.5" cy="5.3" r="3.9"/><circle cx="26.4" cy="20.6" r="3.9"/><circle cx="11.4" cy="26.5" r="3.9"/><path d="M9.2 8.5L20.7 6.1M8.8 11.1L23.0 18.8M25.0 9.2L25.9 16.7M22.8 22.0L15.0 25.1M6.7 13.0L10.1 22.8"/></g></svg>
<div class="t" style="left:2287.00px;top:746.34px;font-size:25px;color:#3571B8;letter-spacing:-0.181px;">model</div>
<svg style="position:absolute;left:2238px;top:871px;" width="32" height="32" viewBox="0 0 32 32" fill="none"><g stroke="#3571B8" stroke-width="2.6" fill="none"><circle cx="5.4" cy="9.3" r="3.9"/><circle cx="24.5" cy="5.3" r="3.9"/><circle cx="26.4" cy="20.6" r="3.9"/><circle cx="11.4" cy="26.5" r="3.9"/><path d="M9.2 8.5L20.7 6.1M8.8 11.1L23.0 18.8M25.0 9.2L25.9 16.7M22.8 22.0L15.0 25.1M6.7 13.0L10.1 22.8"/></g></svg>
<svg style="position:absolute;left:2256.2px;top:882.9px;" width="20" height="20" viewBox="0 0 20 20" fill="none"><circle cx="10" cy="10" r="6.9" fill="#fff" stroke="#45A35A" stroke-width="2.3"/><path d="M6.9 10.2L9 12.2L13.2 8" stroke="#45A35A" stroke-width="2.2" fill="none"/></svg>
<div class="t" style="left:2287.00px;top:875.54px;font-size:25px;color:#3571B8;letter-spacing:-0.035px;">main.default.wine_model...</div>
<div class="t" style="left:2639.00px;top:744.99px;font-size:26px;color:#11171C;">-</div>
<div class="t" style="left:2858.70px;top:745.84px;font-size:25px;color:#11171C;letter-spacing:0.033px;">0.440172356...</div>
<div class="t" style="left:3078.70px;top:745.84px;font-size:25px;color:#11171C;letter-spacing:-0.467px;">0.121390216...</div>
<div class="t" style="left:2639.00px;top:874.84px;font-size:25px;color:#11171C;letter-spacing:-0.160px;">0.815549512...</div>
<div class="t" style="left:2858.70px;top:873.99px;font-size:26px;color:#11171C;">-</div>
<div class="t" style="left:3078.70px;top:873.99px;font-size:26px;color:#11171C;">-</div>
</body></html>
